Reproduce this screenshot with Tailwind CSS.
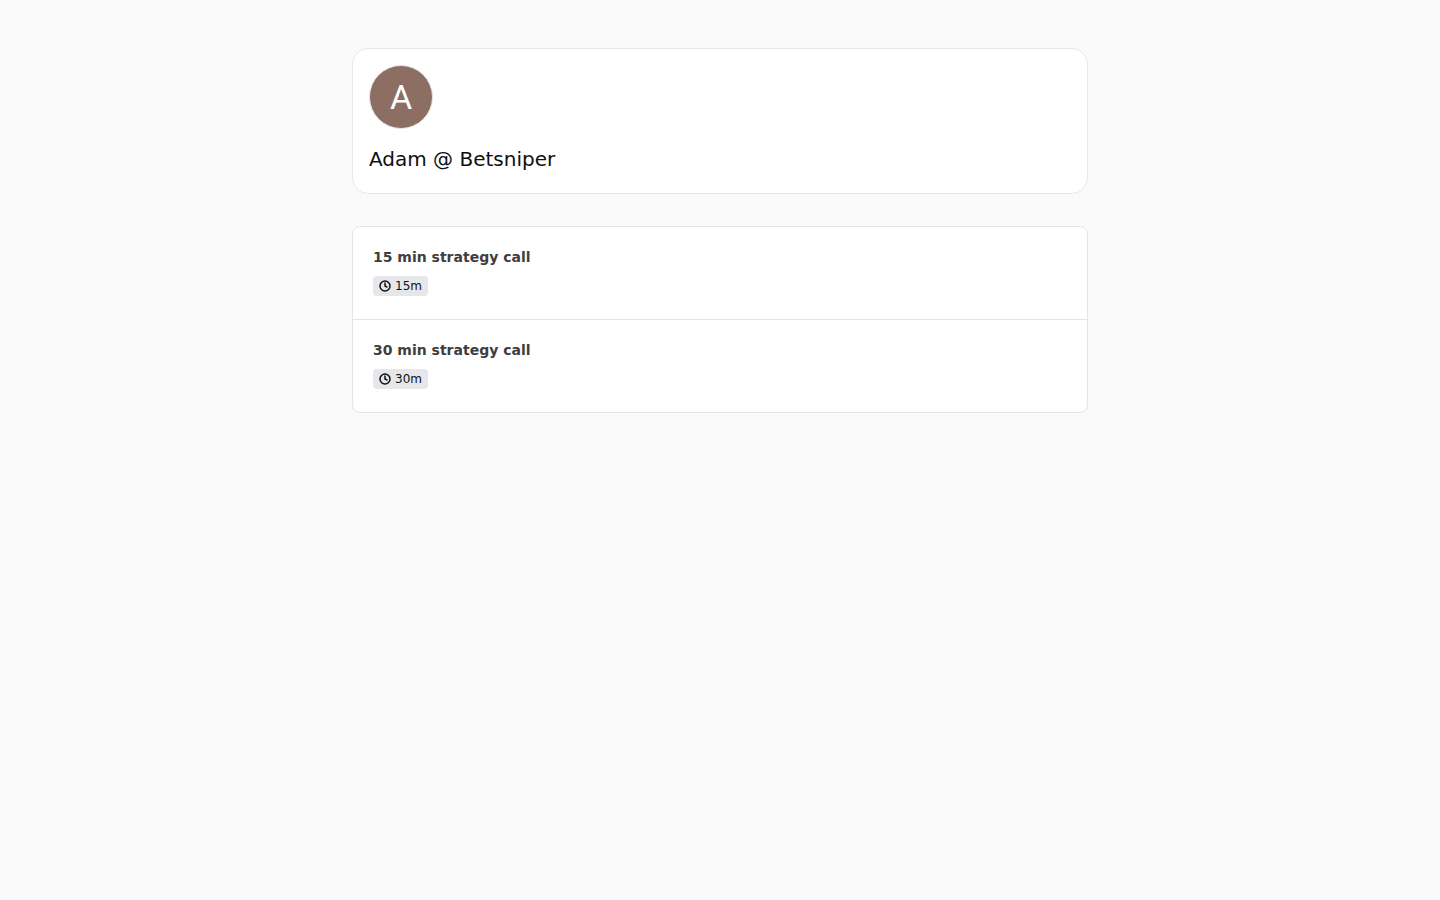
<!DOCTYPE html>
<html lang="en">
<head>
    <meta charset="UTF-8">
    <meta name="viewport" content="width=device-width, initial-scale=1.0">
    <title>Adam @ Betsniper</title>
    <script src="https://cdn.jsdelivr.net/npm/@tailwindcss/browser@4"></script>
</head>
<body class="min-h-screen bg-[#fafafa] font-['DejaVu_Sans',sans-serif] antialiased">
    <main class="max-w-3xl mx-auto px-4 py-12">
        <!-- Profile -->
        <header class="bg-white border border-[#e8e8e8] rounded-2xl p-4 mb-8">
            <div class="size-16 rounded-full border border-[#e5e5e5] bg-[#8d6e63] flex items-center justify-center text-white text-[34px] leading-none font-[Roboto,sans-serif]">A</div>
            <h1 class="text-xl text-[#0f0f0f] mt-4 mb-1">Adam @ Betsniper</h1>
        </header>

        <!-- Event types -->
        <ul class="bg-white border border-[#e5e5e5] rounded-lg divide-y divide-[#e5e5e5]">
            <li>
                <a href="#15min" class="block px-5 pt-5 pb-[23px]">
                    <h2 class="text-sm font-bold text-[#3e3e3e]">15 min strategy call</h2>
                    <div class="flex mt-[9px]">
                        <span class="inline-flex items-center gap-1 h-5 px-1.5 rounded-sm bg-[#e5e7eb] text-xs text-[#111111]">
                            <svg class="size-3" viewBox="0 0 24 24" fill="none" stroke="currentColor" stroke-width="3" stroke-linecap="round" stroke-linejoin="round" aria-hidden="true"><circle cx="12" cy="12" r="10"/><path d="M12 6v6l4 2"/></svg>
                            15m
                        </span>
                    </div>
                </a>
            </li>
            <li>
                <a href="#30min" class="block px-5 pt-5 pb-[23px]">
                    <h2 class="text-sm font-bold text-[#3e3e3e]">30 min strategy call</h2>
                    <div class="flex mt-[9px]">
                        <span class="inline-flex items-center gap-1 h-5 px-1.5 rounded-sm bg-[#e5e7eb] text-xs text-[#111111]">
                            <svg class="size-3" viewBox="0 0 24 24" fill="none" stroke="currentColor" stroke-width="3" stroke-linecap="round" stroke-linejoin="round" aria-hidden="true"><circle cx="12" cy="12" r="10"/><path d="M12 6v6l4 2"/></svg>
                            30m
                        </span>
                    </div>
                </a>
            </li>
        </ul>
    </main>
</body>
</html>
